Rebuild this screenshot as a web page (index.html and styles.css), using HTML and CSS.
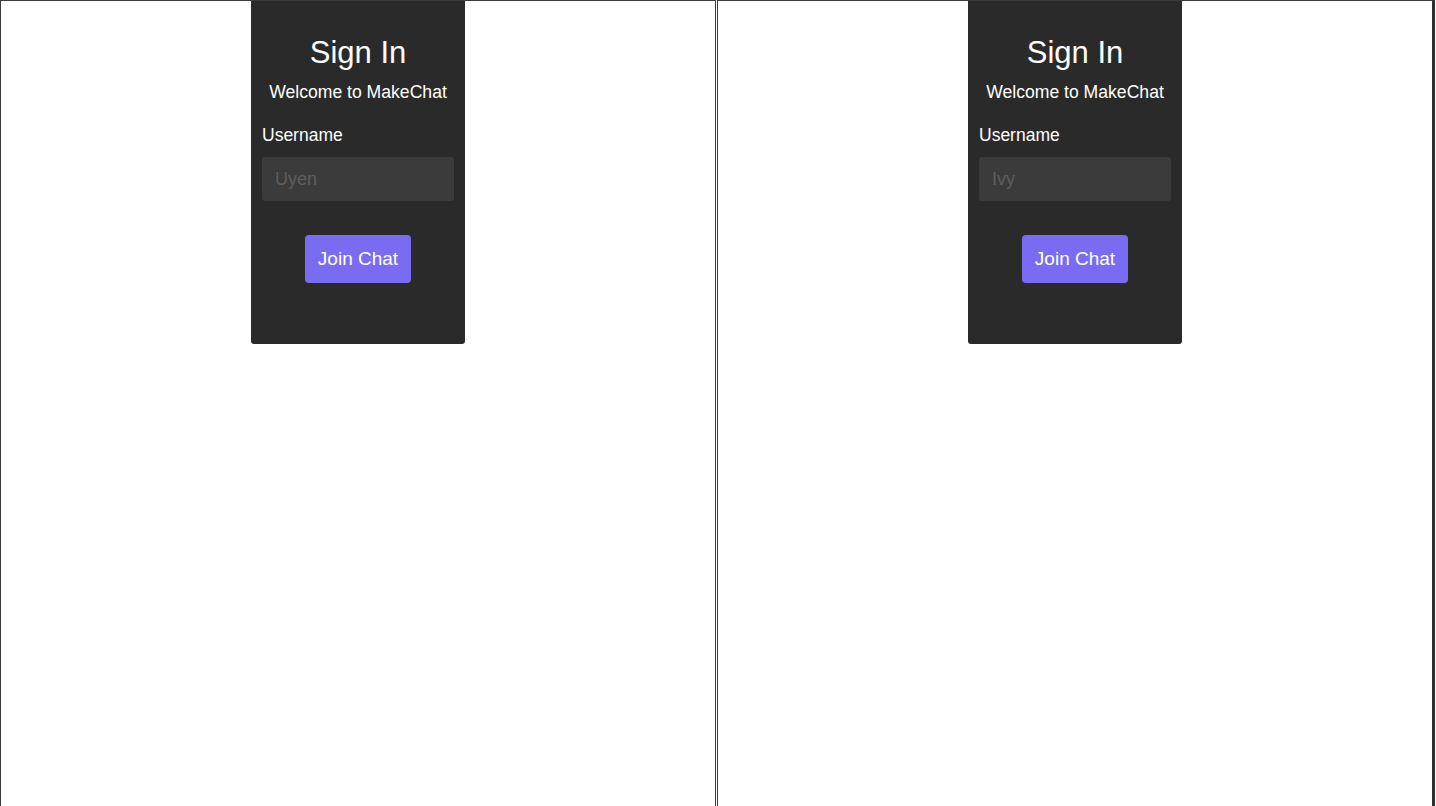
FILE: index.html
```html
<!DOCTYPE html>
<html>
<head>
<meta charset="utf-8">
<title>MakeChat</title>
<link rel="stylesheet" href="styles.css">
</head>
<body>
<div class="frames">
  <section class="frame">
    <div class="card">
      <h1 class="title">Sign In</h1>
      <p class="welcome">Welcome to MakeChat</p>
      <label class="label" for="u1">Username</label>
      <input class="input" id="u1" type="text" placeholder="Uyen">
      <div class="actions"><button class="btn">Join Chat</button></div>
    </div>
  </section>
  <section class="frame frame-right">
    <div class="card">
      <h1 class="title">Sign In</h1>
      <p class="welcome">Welcome to MakeChat</p>
      <label class="label" for="u2">Username</label>
      <input class="input" id="u2" type="text" placeholder="Ivy">
      <div class="actions"><button class="btn">Join Chat</button></div>
    </div>
  </section>
</div>
</body>
</html>
```
FILE: styles.css
```css
html, body {
  margin: 0;
  padding: 0;
  background: #fff;
  font-family: "Liberation Sans", Arial, sans-serif;
  overflow: hidden;
}
.frames {
  display: flex;
  gap: 1px;
  height: 806px;
}
.frame {
  width: 714px;
  height: 820px;
  border: 1px solid #3c3c3c;
  border-bottom: none;
  display: flex;
  justify-content: center;
  align-items: flex-start;
}
.frame-right {
  border-right: 3px solid #2e2e2e;
}
.card {
  width: 192px;
  height: 343px;
  box-sizing: content-box;
  padding: 0 11px;
  background: #2a2a2a;
  border-radius: 0 0 3px 3px;
  color: #fff;
  display: flex;
  flex-direction: column;
}
.title {
  margin: 34px 0 0;
  font-size: 31px;
  font-weight: normal;
  text-align: center;
  line-height: 36px;
}
.welcome {
  margin: 11px 0 0;
  font-size: 17.6px;
  text-align: center;
  line-height: 20px;
}
.label {
  margin-top: 23px;
  font-size: 17.5px;
  line-height: 20px;
}
.input {
  margin-top: 12px;
  height: 44px;
  box-sizing: border-box;
  width: 192px;
  border: none;
  border-radius: 3px;
  background: #3b3b3b;
  padding: 0 13px;
  font-family: inherit;
  font-size: 18px;
  color: #fff;
  outline: none;
}
.input::placeholder {
  color: #5e5e5e;
}
.actions {
  margin-top: 34px;
  display: flex;
  justify-content: center;
}
.btn {
  width: 106px;
  height: 48px;
  border: none;
  border-radius: 4px;
  background: #7a6cf2;
  color: #fff;
  font-family: inherit;
  font-size: 19px;
  padding: 0;
}
```
